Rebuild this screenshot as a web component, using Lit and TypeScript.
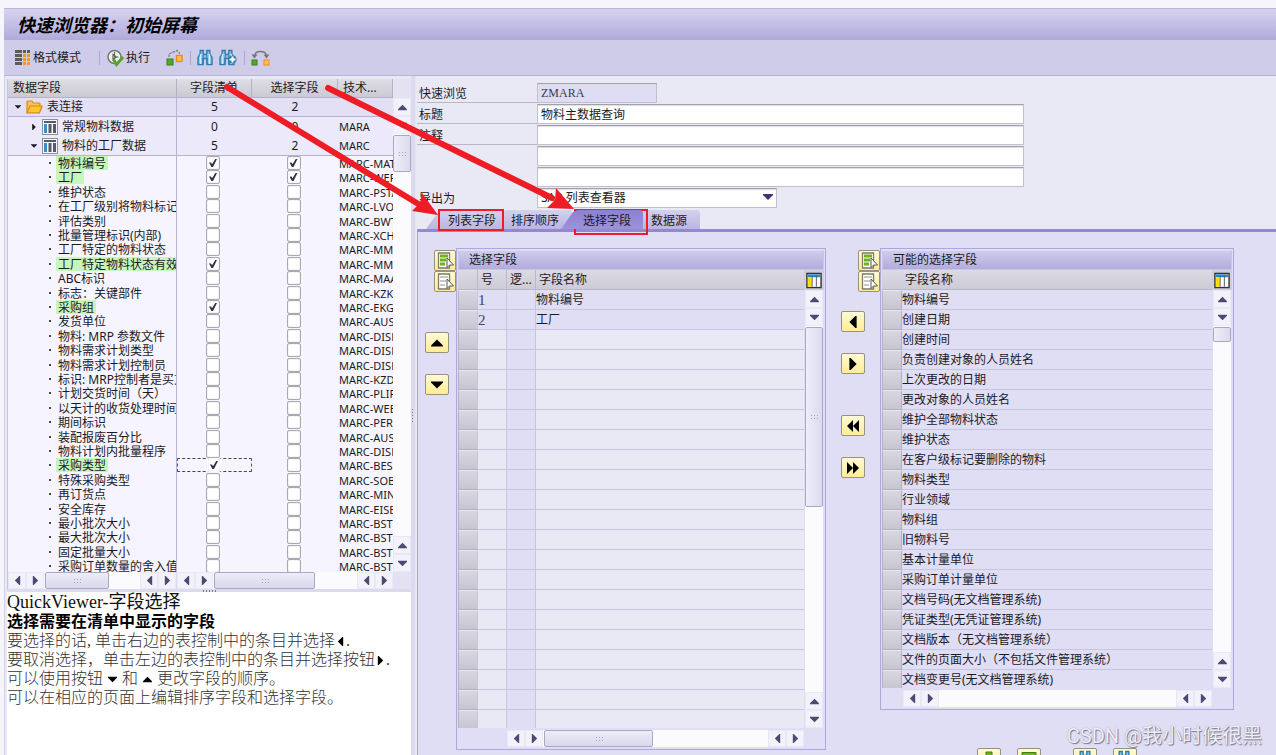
import { LitElement, html, svg, css, nothing } from "lit";
import { customElement } from "lit/decorators.js";
import { classMap } from "lit/directives/class-map.js";

type Dir = "up" | "down" | "left" | "right";

interface Leaf {
  name: string;
  code: string;
  list?: boolean;
  select?: boolean;
  focus?: boolean;
}

const leaves: Leaf[] = [
  { name: "物料编号", code: "MARC-MATNR", list: true, select: true },
  { name: "工厂", code: "MARC-WERKS", list: true, select: true },
  { name: "维护状态", code: "MARC-PSTAT" },
  { name: "在工厂级别将物料标记为删除", code: "MARC-LVORM" },
  { name: "评估类别", code: "MARC-BWTTY" },
  { name: "批量管理标识(内部)", code: "MARC-XCHAR" },
  { name: "工厂特定的物料状态", code: "MARC-MMSTA" },
  { name: "工厂特定物料状态有效的起始日期", code: "MARC-MMSTD", list: true },
  { name: "ABC标识", code: "MARC-MAABC" },
  { name: "标志：关键部件", code: "MARC-KZKRI" },
  { name: "采购组", code: "MARC-EKGRP", list: true },
  { name: "发货单位", code: "MARC-AUSME" },
  { name: "物料: MRP 参数文件", code: "MARC-DISPR" },
  { name: "物料需求计划类型", code: "MARC-DISMM" },
  { name: "物料需求计划控制员", code: "MARC-DISPO" },
  { name: "标识: MRP控制者是买方", code: "MARC-KZDIE" },
  { name: "计划交货时间（天）", code: "MARC-PLIFZ" },
  { name: "以天计的收货处理时间", code: "MARC-WEBAZ" },
  { name: "期间标识", code: "MARC-PERKZ" },
  { name: "装配报废百分比", code: "MARC-AUSSS" },
  { name: "物料计划内批量程序", code: "MARC-DISLS" },
  { name: "采购类型", code: "MARC-BESKZ", list: true, focus: true },
  { name: "特殊采购类型", code: "MARC-SOBSL" },
  { name: "再订货点", code: "MARC-MINBE" },
  { name: "安全库存", code: "MARC-EISBE" },
  { name: "最小批次大小", code: "MARC-BSTMI" },
  { name: "最大批次大小", code: "MARC-BSTMA" },
  { name: "固定批量大小", code: "MARC-BSTFE" },
  { name: "采购订单数量的舍入值", code: "MARC-BSTRF" },
];

const candidates = [
  "物料编号", "创建日期", "创建时间", "负责创建对象的人员姓名", "上次更改的日期",
  "更改对象的人员姓名", "维护全部物料状态", "维护状态", "在客户级标记要删除的物料",
  "物料类型", "行业领域", "物料组", "旧物料号", "基本计量单位", "采购订单计量单位",
  "文档号码(无文档管理系统)", "凭证类型(无凭证管理系统)", "文档版本（无文档管理系统）",
  "文件的页面大小（不包括文件管理系统）", "文档变更号(无文档管理系统)",
];

const chosen = ["物料编号", "工厂"];
const chosenRows = Array.from({ length: 22 }, (_, i) => chosen[i] ?? "");

const triangles: Record<Dir, string> = {
  up: "M0 8V7L5 2L10 7V8Z",
  down: "M0 2V3L5 8L10 3V2Z",
  left: "M8 0H7L2 5L7 10H8Z",
  right: "M2 0H3L8 5L3 10H2Z",
};

const tri = (d: Dir, size = 10) => html`<svg width=${size} height=${size} viewBox="0 0 10 10"><path d=${triangles[d]} fill="currentColor"/></svg>`;

const binoculars = svg`
  <path d="M3.2 1.5h3v3l.8 1h2l.8-1v-3h3v3l2.200 4v7h-5v-6h-4v6H1v-7l2.200-4z" fill="#8cc4e4" stroke="#2c7db0" stroke-width="1.4"/>
  <path d="M3.500 5v10M12.500 5v10" stroke="#d5edf8" stroke-width="1.300"/>
  <path d="M6.200 6v9M9.800 6v9" stroke="#2c7db0" stroke-width="1"/>`;

const iconLayout = html`<svg width="16" height="17" viewBox="0 0 16 17">
  ${[1, 5, 9, 13].map((y) => svg`
    <rect x="0" y=${y} width="7" height="3" fill="#5c5c60"/>
    <rect x="8" y=${y} width="3" height="3" fill=${y < 5 ? "#5c5c60" : "#f39a1c"}/>
    <rect x="12" y=${y} width="3" height="3" fill=${y < 5 ? "#5c5c60" : "#f39a1c"}/>`)}
</svg>`;

const iconRun = html`<svg width="17" height="18" viewBox="0 0 17 18">
  <circle cx="7.500" cy="8" r="6.500" fill="#f2f4ec" stroke="#747b74" stroke-width="1.500"/>
  <path d="M7.500 3v5h4M6 5.500v5l3.500-2.500z" fill="none" stroke="#60685f" stroke-width="1.200"/>
  <path d="M6.500 10.500l3 5L16 8" fill="none" stroke="#58a52b" stroke-width="3"/>
</svg>`;

const iconJoin = html`<svg width="18" height="17" viewBox="0 0 18 17">
  <path d="M3 8V5l8-3.500 3 3" fill="none" stroke="#777" stroke-width="1.200" stroke-dasharray="2.500 1"/>
  <rect x="1" y="10" width="6" height="6" fill="#54a62a" stroke="#3a7f1b"/>
  <rect x="10.500" y="6.500" width="5.500" height="6" fill="#ffc24a" stroke="#f08a1d" stroke-width="1.400"/>
</svg>`;

const iconFind = html`<svg width="16" height="18" viewBox="0 0 16 18">${binoculars}</svg>`;

const iconFindNext = html`<svg width="18" height="18" viewBox="0 0 18 18">${binoculars}
  <circle cx="13.500" cy="10.500" r="4" fill="#2c7db0"/>
  <path d="M13.500 7.500v6M10.500 10.500h6" stroke="#fff" stroke-width="2"/>
</svg>`;

const iconSwap = html`<svg width="19" height="18" viewBox="0 0 19 18">
  <path d="M3.500 7C4 1 15 1 15.500 7" fill="none" stroke="#777" stroke-width="1.300"/>
  <path d="M0.500 5.500h6l-3 4zM12.500 5.500h6l-3 4z" fill="#777"/>
  <rect x="1" y="11" width="5" height="5" fill="#54a62a" stroke="#3a7f1b"/>
  <rect x="13" y="11" width="5" height="5" fill="#ffc24a" stroke="#f08a1d"/>
</svg>`;

const iconFolder = html`<svg width="17" height="14" viewBox="0 0 17 14">
  <path d="M1 12.500V2q0-1 1-1h4l1.500 2H13q1 0 1 1v2" fill="#f7c35c" stroke="#d98a12" stroke-width="1.200"/>
  <path d="M1 12.800L4 6h12.200l-2.700 6.800z" fill="#ffc72e" stroke="#d98a12" stroke-width="1.200"/>
</svg>`;

const iconTable = html`<svg width="16" height="16" viewBox="0 0 16 16">
  <rect x=".5" y=".5" width="15" height="15" fill="#f7f7fa" stroke="#8d8f99"/>
  <path d="M2 3h12" stroke="#555a66" stroke-width="2"/>
  <path d="M3.500 5v9" stroke="#3d8fc4" stroke-width="3"/>
  <path d="M8 5v9M12.500 5v9" stroke="#565b6b" stroke-width="3"/>
</svg>`;

const iconConfig = html`<svg width="17" height="17" viewBox="0 0 17 17">
  <rect x="1" y="1" width="15" height="15" fill="#fff" stroke="#333" stroke-width="1.500"/>
  <rect x="2" y="2" width="13" height="3" fill="#2a86cc"/>
  <rect x="2" y="5" width="4" height="10" fill="#ffe000"/>
  <path d="M6.500 3v12M11 3v12" stroke="#555" stroke-width="1"/>
</svg>`;

const iconPick = (on: boolean) => html`<svg width="17" height="17" viewBox="0 0 17 17">
  <path d="M1.500 1h11v15h-11z" fill="#fff" stroke="#7b7b6e" stroke-width="1.300"/>
  <path d="M3 4h8M3 8h6M3 12h5" stroke=${on ? "#6fb21d" : "#b5b5b0"} stroke-width=${on ? 3 : 1.4}/>
  <path d="M10 6v9.500l2.500-2.500h4z" fill="#fff" stroke="#555" stroke-width="1"/>
</svg>`;

const sheet = css`
  .tri-btn {
    display: flex;
    align-items: center;
    justify-content: center;
    box-sizing: border-box;
    width: 18px;
    height: 18px;
    flex: none;
    padding: 0;
    border: 1px solid #e9e8f5;
    background: #f3f2fb;
    color: #4c4a72;
  }
`;

@customElement("scroll-strip")
export class ScrollStrip extends LitElement {
  static properties = {
    vertical: { type: Boolean, reflect: true },
    thumb: { type: Number },
    grip: { type: Boolean },
  };
  declare vertical: boolean;
  declare thumb: number;
  declare grip: boolean;

  constructor() {
    super();
    this.vertical = false;
    this.thumb = 0;
    this.grip = false;
  }

  static styles = [
    sheet,
    css`
      :host { display: flex; height: 17px; min-width: 0; background: #fbfbfd; }
      :host([vertical]) { flex-direction: column; width: 18px; height: auto; min-height: 0; }
      .track { flex: 1; min-width: 0; min-height: 0; display: flex; padding: 0 1px; }
      :host([vertical]) .track { flex-direction: column; padding: 1px 0; }
      .tri-btn { height: 17px; }
      :host([vertical]) .tri-btn { height: 18px; }
      .thumb {
        box-sizing: border-box;
        border: 1px solid #aaa8c0;
        border-radius: 2px;
        background: linear-gradient(#eeedf8, #d9d7ec);
        display: flex;
        align-items: center;
        justify-content: center;
      }
      :host([vertical]) .thumb { background: linear-gradient(90deg, #eeedf8, #dcdaee); }
      .grip { width: 8px; height: 6px; background: radial-gradient(#a5a2c0 1px, transparent 1px) 0 0 / 3px 3px; }
    `,
  ];

  render() {
    const [a, b]: Dir[] = this.vertical ? ["up", "down"] : ["left", "right"];
    const size = this.vertical ? `height:${this.thumb}px` : `width:${this.thumb}px`;
    const pair = html`
      <button class="tri-btn" tabindex="-1" aria-label=${a}>${tri(a, 9)}</button>
      <button class="tri-btn" tabindex="-1" aria-label=${b}>${tri(b, 9)}</button>`;
    return html`${pair}
      <div class="track">
        ${this.thumb ? html`<div class="thumb" style=${size}>${this.grip ? html`<i class="grip"></i>` : nothing}</div>` : nothing}
      </div>${pair}`;
  }
}

@customElement("field-tree")
export class FieldTree extends LitElement {
  static styles = css`
    :host { display: block; border-left: 1px solid #c9c6e2; }
    .main { display: flex; height: 493px; }
    .clip { flex: 1; min-width: 0; overflow: hidden; background: #f6f4ff; }
    table { width: 100%; table-layout: fixed; border-spacing: 0; }
    .c-name { width: 169px; }
    .c-list { width: 75px; }
    .c-sel { width: 86px; }
    th, td { padding: 0; font-weight: normal; white-space: nowrap; overflow: hidden; }
    th {
      height: 19px;
      line-height: 18px;
      box-sizing: border-box;
      background: linear-gradient(#dfdee6, #cbcad4);
      border-bottom: 1px solid #b5b2cc;
      border-right: 1px solid #b5b2c8;
      text-align: center;
    }
    th.left { text-align: left; padding-left: 5px; }
    td:first-child { border-right: 1px solid #b8b4d2; }
    .num { text-align: center; }
    .code { font-size: 11px; padding-left: 1px; }
    .node td { height: 19px; box-sizing: border-box; background: #ebe9fa; line-height: 18px; }
    .node.root td { background: #e3e0f6; }
    .node.last td { height: 20px; }
    .node.line td { border-bottom: 1px solid #b5b0d8; }
    .label { display: flex; align-items: center; gap: 4px; padding-left: 6px; }
    .label.sub { padding-left: 22px; }
    .toggle { display: flex; justify-content: center; width: 8px; }
    .leaf { height: 14px; }
    .leaf:nth-child(5n + 2), .leaf:nth-child(5n + 4) { height: 15px; }
    .leaf td { line-height: 14px; vertical-align: top; }
    .leaf-name { display: flex; padding-left: 41px; }
    .dot { width: 2px; height: 2px; background: #444; margin: 6px 5px 0 0; flex: none; }
    .text { padding: 0 2px; height: 14px; line-height: 16px; }
    .text.on { background: #c5f6bc; }
    .short { height: 14px; line-height: 16px; }
    .wrap { display: flex; justify-content: center; height: 14px; box-sizing: border-box; padding-right: 3px; }
    .wrap.focus { border: 1px dashed #444; border-left-color: #e11; border-right-color: #e11; padding: 0 1px 0 0; }
    .wrap.focus input { margin-top: -1px; border-color: transparent; }
    input {
      appearance: none;
      box-sizing: border-box;
      margin: 0;
      width: 14px;
      height: 14px;
      flex: none;
      border: 1px solid #aaa9b2;
      border-radius: 2px;
      background: #fff;
      box-shadow: inset 0 0 1px #999;
    }
    input:checked::after {
      content: "";
      display: block;
      width: 8px;
      height: 8px;
      margin: 2px;
      background: #352c4c;
      clip-path: polygon(0 45%, 25% 45%, 38% 65%, 78% 0, 100% 0, 50% 100%, 30% 100%);
    }
    .side { display: flex; flex-direction: column; width: 18px; background: #e3e1f2; }
    .cap { height: 19px; }
    scroll-strip[vertical] { flex: 1; }
    .bottom { display: flex; background: #e3e1f2; }
    .b1 { width: 169px; border-right: 1px solid #dcdaf0; box-sizing: border-box; }
    .b2 { flex: 1; }
    .corner { width: 18px; }
  `;

  private leafRow(l: Leaf) {
    return html`<tr class="leaf">
      <td><div class="leaf-name"><i class="dot"></i><span class=${classMap({ text: true, on: !!l.list })}>${l.name}</span></div></td>
      <td><div class=${classMap({ wrap: true, focus: !!l.focus })}><input type="checkbox" aria-label="字段清单 ${l.name}" .checked=${!!l.list}></div></td>
      <td><div class="wrap"><input type="checkbox" aria-label="选择字段 ${l.name}" .checked=${!!l.select}></div></td>
      <td class="code"><div class="short">${l.code}</div></td>
    </tr>`;
  }

  render() {
    return html`
      <div class="main">
        <div class="clip">
          <table>
            <colgroup><col class="c-name"><col class="c-list"><col class="c-sel"><col></colgroup>
            <thead><tr><th class="left">数据字段</th><th>字段清单</th><th>选择字段</th><th class="left">技术...</th></tr></thead>
            <tbody>
              <tr class="node root line"><td><div class="label"><span class="toggle">${tri("down", 6)}</span>${iconFolder}表连接</div></td><td class="num">5</td><td class="num">2</td><td></td></tr>
              <tr class="node"><td><div class="label sub"><span class="toggle">${tri("right", 6)}</span>${iconTable}常规物料数据</div></td><td class="num">0</td><td class="num">0</td><td class="code">MARA</td></tr>
              <tr class="node line last"><td><div class="label sub"><span class="toggle">${tri("down", 6)}</span>${iconTable}物料的工厂数据</div></td><td class="num">5</td><td class="num">2</td><td class="code">MARC</td></tr>
            </tbody>
            <tbody>${leaves.map((l) => this.leafRow(l))}</tbody>
          </table>
        </div>
        <div class="side"><div class="cap"></div><scroll-strip vertical grip .thumb=${37}></scroll-strip></div>
      </div>
      <div class="bottom">
        <scroll-strip class="b1" grip .thumb=${64}></scroll-strip>
        <scroll-strip class="b2" grip .thumb=${101}></scroll-strip>
        <div class="corner"></div>
      </div>`;
  }
}

@customElement("pick-table")
export class PickTable extends LitElement {
  static properties = {
    heading: {},
    rows: { attribute: false },
    numbered: { type: Boolean, reflect: true },
    thumb: { type: Number },
    hthumb: { type: Number },
  };
  declare heading: string;
  declare rows: string[];
  declare numbered: boolean;
  declare thumb: number;
  declare hthumb: number;

  static styles = css`
    :host { display: block; box-sizing: border-box; border: 1px solid #aea7dc; padding: 1px; background: #e0def5; min-width: 0; }
    .title {
      box-sizing: border-box;
      height: 20px;
      padding-left: 10px;
      line-height: 17px;
      border: 1px solid #c9c5ea;
      border-top-color: #dedbf4;
      background: linear-gradient(#cfcceb, #b2acdc);
    }
    .body { display: flex; }
    table { flex: 1; min-width: 0; table-layout: fixed; border-spacing: 0; }
    .c-mark { width: 20px; }
    .c-num { width: 29px; }
    th, td { box-sizing: border-box; height: 20px; padding: 1px 0 0; line-height: 18px; font-weight: normal; text-align: left; white-space: nowrap; overflow: hidden; }
    th { background: linear-gradient(#dcdbe4, #cccbd6); border-bottom: 1px solid #b9b7c8; padding-left: 3px; }
    :host([numbered]) th { border-right: 1px solid #bbb8cc; }
    :host([numbered]) th:last-child { border-right: 0; }
    td { border-bottom: 1px solid #c8c5e0; }
    .mark { background: linear-gradient(#d8d7e1, #c6c5d1); border: 1px solid #b2b0c2; border-top-color: #e8e7f0; }
    tr:last-child td { height: 18px; line-height: 16px; border-bottom: 0; }
    :host([numbered]) td { border-right: 1px solid #c8c5dc; }
    :host([numbered]) td:last-child { border-right: 0; }
    .blank td:not(.mark):not(.logic) { background: #e9e8f5; }
    .no { font: 15px/18px "Liberation Serif", serif; color: #3c4660; }
    .side { display: flex; flex-direction: column; width: 20px; align-items: center; }
    .cfg { width: 20px; height: 20px; padding: 2px; border: 0; display: flex; background: #cfced9; box-sizing: border-box; }
    scroll-strip[vertical] { flex: 1; }
    .foot { margin: 2px 20px 1px 21px; }
    :host([numbered]) .foot { margin-left: 49px; }
  `;

  render() {
    return html`
      <div class="title">${this.heading}</div>
      <div class="body">
        <table>
          <colgroup><col class="c-mark">${this.numbered ? html`<col class="c-num"><col class="c-num">` : nothing}<col></colgroup>
          <thead><tr><th></th>${this.numbered ? html`<th>号</th><th>逻...</th>` : nothing}<th>字段名称</th></tr></thead>
          <tbody>
            ${this.rows.map((r, i) => html`<tr class=${r ? "" : "blank"}>
              <td class="mark"></td>
              ${this.numbered ? html`<td class="no">${r ? i + 1 : ""}</td><td class="logic"></td>` : nothing}
              <td>${r}</td>
            </tr>`)}
          </tbody>
        </table>
        <div class="side">
          <button class="cfg" aria-label="表设置">${iconConfig}</button>
          <scroll-strip vertical ?grip=${this.numbered} .thumb=${this.thumb}></scroll-strip>
        </div>
      </div>
      <scroll-strip class="foot" grip .thumb=${this.hthumb ?? 0}></scroll-strip>`;
  }
}

@customElement("app-root")
export class AppRoot extends LitElement {
  static styles = css`
    :host {
      display: flex;
      flex-direction: column;
      box-sizing: border-box;
      height: 100vh;
      overflow: hidden;
      position: relative;
      padding: 8px 0 0 4px;
      background: #f6f5fb;
      color: #1c1a24;
      font: 12px/16px "Noto Sans", "Noto Sans CJK SC", sans-serif;
    }
    button, input, select { font: inherit; color: inherit; }
    h1 {
      flex: none;
      box-sizing: border-box;
      height: 32px;
      margin: 0;
      padding-left: 13px;
      border-top: 1px solid #b9b4dd;
      font: italic bold 18px/30px "Noto Sans CJK SC", sans-serif;
      color: #000;
      background: linear-gradient(#d6d3ef, #b0aadb);
    }
    .tools {
      flex: none;
      box-sizing: border-box;
      height: 36px;
      display: flex;
      align-items: center;
      padding: 0 11px;
      background: #cfcce9;
      border-bottom: 1px solid #b8b4d8;
    }
    .tools button { display: flex; align-items: center; gap: 2px; padding: 0; border: 0; background: none; }
    .tools .sep { width: 1px; height: 14px; background: #aca6d2; }
    .s1 { margin: 0 7px 0 18px; }
    .g1 { margin-left: 16px; }
    .s2 { margin: 0 6px 0 6px; }
    .g2 { margin-left: 6px; }
    .s3 { margin: 0 6px 0 7px; }
    .work { flex: 1; min-height: 0; display: flex; background: #e9e8f5; border-left: 1px solid #d3d0ea; }
    .left { flex: none; width: 404px; display: flex; flex-direction: column; padding: 3px 0 0 2px; }
    .hsplit { flex: none; height: 3px; background: #dcdaef; display: flex; justify-content: center; align-items: center; }
    .dots { width: 15px; height: 2px; background: radial-gradient(#77758f 1px, transparent 1px) 0 0 / 3px 2px; }
    .help {
      flex: 1;
      min-height: 0;
      overflow: hidden;
      background: #fff;
      color: #333;
      font: 16px/19px "Liberation Serif", "Noto Sans CJK SC", serif;
    }
    .help h2 { margin: 0; font-size: 18px; line-height: 20px; font-weight: normal; color: #111; }
    .help h3 { margin: 0; font-size: 16px; line-height: 19px; color: #000; }
    .help p { margin: 0; font-weight: 300; white-space: nowrap; }
    .help svg { margin: 0 1px; color: #000; }
    .vsplit { flex: none; width: 4px; background: #dcdaef; display: flex; align-items: center; border-right: 1px solid #e5e3f4; }
    .vdots { width: 3px; height: 15px; background: radial-gradient(#77758f 1px, transparent 1px) 0 0 / 3px 3px; }
    .right { flex: 1; min-width: 0; display: flex; flex-direction: column; padding: 7px 0 0 1px; }
    .form { flex: none; display: flex; flex-direction: column; gap: 1px; }
    .line { display: flex; height: 20px; }
    .line label { box-sizing: border-box; width: 120px; height: 20px; padding-left: 2px; line-height: 22px; border-bottom: 1px solid transparent; }
    .line label.rule { border-bottom-color: #bab8c8; }
    .line input, .line select {
      box-sizing: border-box;
      height: 20px;
      padding: 0 3px;
      border: 1px solid #c2c1ca;
      border-top-color: #a2a1ad;
      border-radius: 0;
      background: #fff;
      box-shadow: inset 0 1px 1px #ddd;
      line-height: 16px;
    }
    .line .short { width: 120px; background: #dfddf4; font-family: "Liberation Serif", serif; font-size: 12px; color: #3a3a4c; }
    .line .long { width: 487px; }
    .combo { position: relative; width: 240px; }
    .combo select { width: 100%; appearance: none; }
    .combo span { position: absolute; right: 4px; top: 2px; color: #46307c; }
    .tabs { flex: none; display: flex; height: 19px; margin-top: 2px; padding-left: 9px; }
    .tab { position: relative; box-sizing: border-box; height: 19px; padding: 0 8px 0 22px; border: 0; background: none; line-height: 22px; z-index: 0; }
    .tab::before {
      content: "";
      position: absolute;
      z-index: -1;
      inset: 0;
      background: linear-gradient(#d4d1ee, #bbb5e2);
      clip-path: polygon(0 100%, 12px 2px, 17px 0, calc(100% - 2px) 0, 100% 2px, 100% 100%);
    }
    .tab.next { margin-left: -15px; }
    .tab.mid { padding-right: 13px; }
    .tab.active { margin-left: -11px; padding-right: 12px; z-index: 1; }
    .tab.active::before { background: linear-gradient(#8c80d2, #9d92da); }
    .tab.last { margin-left: -14px; padding-right: 13px; }
    .pane {
      flex: 1;
      min-height: 0;
      display: flex;
      padding: 16px 42px 0 7px;
      border-top: 3px solid #9388d2;
      border-left: 1px solid #aba4d8;
      background: #e0def5;
      overflow: hidden;
      align-items: flex-start;
    }
    .gutter { flex: none; display: flex; flex-direction: column; padding-top: 2px; width: 31px; }
    .gutter.wide { width: 39px; margin-left: 15px; }
    .key {
      box-sizing: border-box;
      width: 24px;
      height: 21px;
      flex: none;
      display: flex;
      align-items: center;
      justify-content: center;
      padding: 0;
      border: 1px solid #98927c;
      border-radius: 2px;
      background: linear-gradient(#fffad6, #ffec94);
      color: #000;
    }
    .key.pick { width: 22px; align-self: flex-end; }
    .first { margin-top: 40px; }
    .wide .first { margin-top: 19px; }
    .next-key { margin-top: 21px; }
    .gap-key { margin-top: 41px; }
    .t1 { flex: 366 1 0; }
    .col { flex: 354 1 0; min-width: 0; }
    .actions { display: flex; gap: 16px; margin: 38px 0 0 97px; }
    .actions .apart { margin-left: 16px; }
    .marks { position: absolute; left: 0; top: 0; pointer-events: none; }
    .credit {
      position: absolute;
      right: 14px;
      bottom: 5px;
      font: 20px/28px Roboto, "Noto Sans CJK SC", sans-serif;
      color: #f0eff8;
      text-shadow: 1px 1px 1px #77758a, 0 0 1px #8a889c;
    }
  `;

  private key(d: Dir, label: string, cls: string, twice = false) {
    return html`<button class="key ${cls}" aria-label=${label}>
      ${twice
        ? html`<svg width="14" height="12" viewBox="0 0 14 12">${d === "left"
            ? svg`<path d="M7 0V12L1 6ZM13 0V12L7 6Z"/>`
            : svg`<path d="M1 0V12L7 6ZM7 0V12L13 6Z"/>`}</svg>`
        : tri(d, 12)}
    </button>`;
  }

  render() {
    return html`
      <h1>快速浏览器：初始屏幕</h1>
      <div class="tools">
        <button>${iconLayout}格式模式</button><i class="sep s1"></i>
        <button>${iconRun}执行</button>
        <button class="g1" aria-label="连接">${iconJoin}</button><i class="sep s2"></i>
        <button aria-label="查找">${iconFind}</button>
        <button class="g2" aria-label="继续查找">${iconFindNext}</button><i class="sep s3"></i>
        <button aria-label="交换">${iconSwap}</button>
      </div>
      <div class="work">
        <div class="left">
          <field-tree></field-tree>
          <div class="hsplit"><i class="dots"></i></div>
          <div class="help">
            <h2>QuickViewer-字段选择</h2>
            <h3>选择需要在清单中显示的字段</h3>
            <p>要选择的话, 单击右边的表控制中的条目并选择${tri("left", 9)}.</p>
            <p>要取消选择，单击左边的表控制中的条目并选择按钮${tri("right", 9)}.</p>
            <p>可以使用按钮 ${tri("down", 9)} 和 ${tri("up", 9)} 更改字段的顺序。</p>
            <p>可以在相应的页面上编辑排序字段和选择字段。</p>
          </div>
        </div>
        <div class="vsplit"><i class="vdots"></i></div>
        <div class="right">
          <div class="form">
            <div class="line"><label class="rule" for="q">快速浏览</label><input id="q" class="short" value="ZMARA" readonly></div>
            <div class="line"><label class="rule" for="t">标题</label><input id="t" class="long" value="物料主数据查询"></div>
            <div class="line"><label class="rule" for="n1">注释</label><input id="n1" class="long"></div>
            <div class="line"><label for="n2"></label><input id="n2" class="long" aria-label="注释 2"></div>
            <div class="line"><label for="n3"></label><input id="n3" class="long" aria-label="注释 3"></div>
            <div class="line"><label for="e">导出为</label><div class="combo"><select id="e"><option>SAP 列表查看器</option></select><span>${tri("down", 10)}</span></div></div>
          </div>
          <div class="tabs" role="tablist">
            <button class="tab" role="tab">列表字段</button>
            <button class="tab next mid" role="tab">排序顺序</button>
            <button class="tab active" role="tab" aria-selected="true">选择字段</button>
            <button class="tab last" role="tab">数据源</button>
          </div>
          <div class="pane">
            <div class="gutter">
              <button class="key pick" aria-label="全选">${iconPick(true)}</button>
              <button class="key pick" aria-label="取消全选">${iconPick(false)}</button>
              ${this.key("up", "上移", "first")}
              ${this.key("down", "下移", "next-key")}
            </div>
            <pick-table class="t1" numbered heading="选择字段" .rows=${chosenRows} .thumb=${180} .hthumb=${109}></pick-table>
            <div class="gutter wide">
              <button class="key pick" aria-label="全选">${iconPick(true)}</button>
              <button class="key pick" aria-label="取消全选">${iconPick(false)}</button>
              ${this.key("left", "添加", "first")}
              ${this.key("right", "移除", "next-key")}
              ${this.key("left", "全部添加", "gap-key", true)}
              ${this.key("right", "全部移除", "next-key", true)}
            </div>
            <div class="col">
              <pick-table heading="可能的选择字段" .rows=${candidates} .thumb=${15}></pick-table>
              <div class="actions">
                <button class="key" aria-label="插入"><svg width="16" height="16" viewBox="0 0 16 16"><path d="M5 1h6v5h4v5H1V6h4z" fill="#6fb21d" stroke="#3f7a12"/></svg></button>
                <button class="key" aria-label="删除"><svg width="16" height="16" viewBox="0 0 16 16"><path d="M1 1.500h14v4H1z" fill="#6fb21d" stroke="#3f7a12"/></svg></button>
                <button class="key apart" aria-label="查找">${iconFind}</button>
                <button class="key" aria-label="继续查找">${iconFindNext}</button>
              </div>
            </div>
          </div>
        </div>
      </div>
      <svg class="marks" width="700" height="260" viewBox="0 0 700 260" fill="none" stroke="#ee1c25">
        <path d="M227 87L420 205M328 88L552 198" stroke-width="6" stroke-linecap="round"/>
        <path d="M438 215L422 193L420 203L412 211ZM574 209L556 188L555 200L547 208Z" fill="#ee1c25" stroke="none"/>
        <rect x="439" y="210" width="64" height="20" stroke-width="2"/>
        <rect x="575" y="210" width="72" height="24" stroke-width="2"/>
      </svg>
      <div class="credit">CSDN @我小时候很黑</div>`;
  }
}
